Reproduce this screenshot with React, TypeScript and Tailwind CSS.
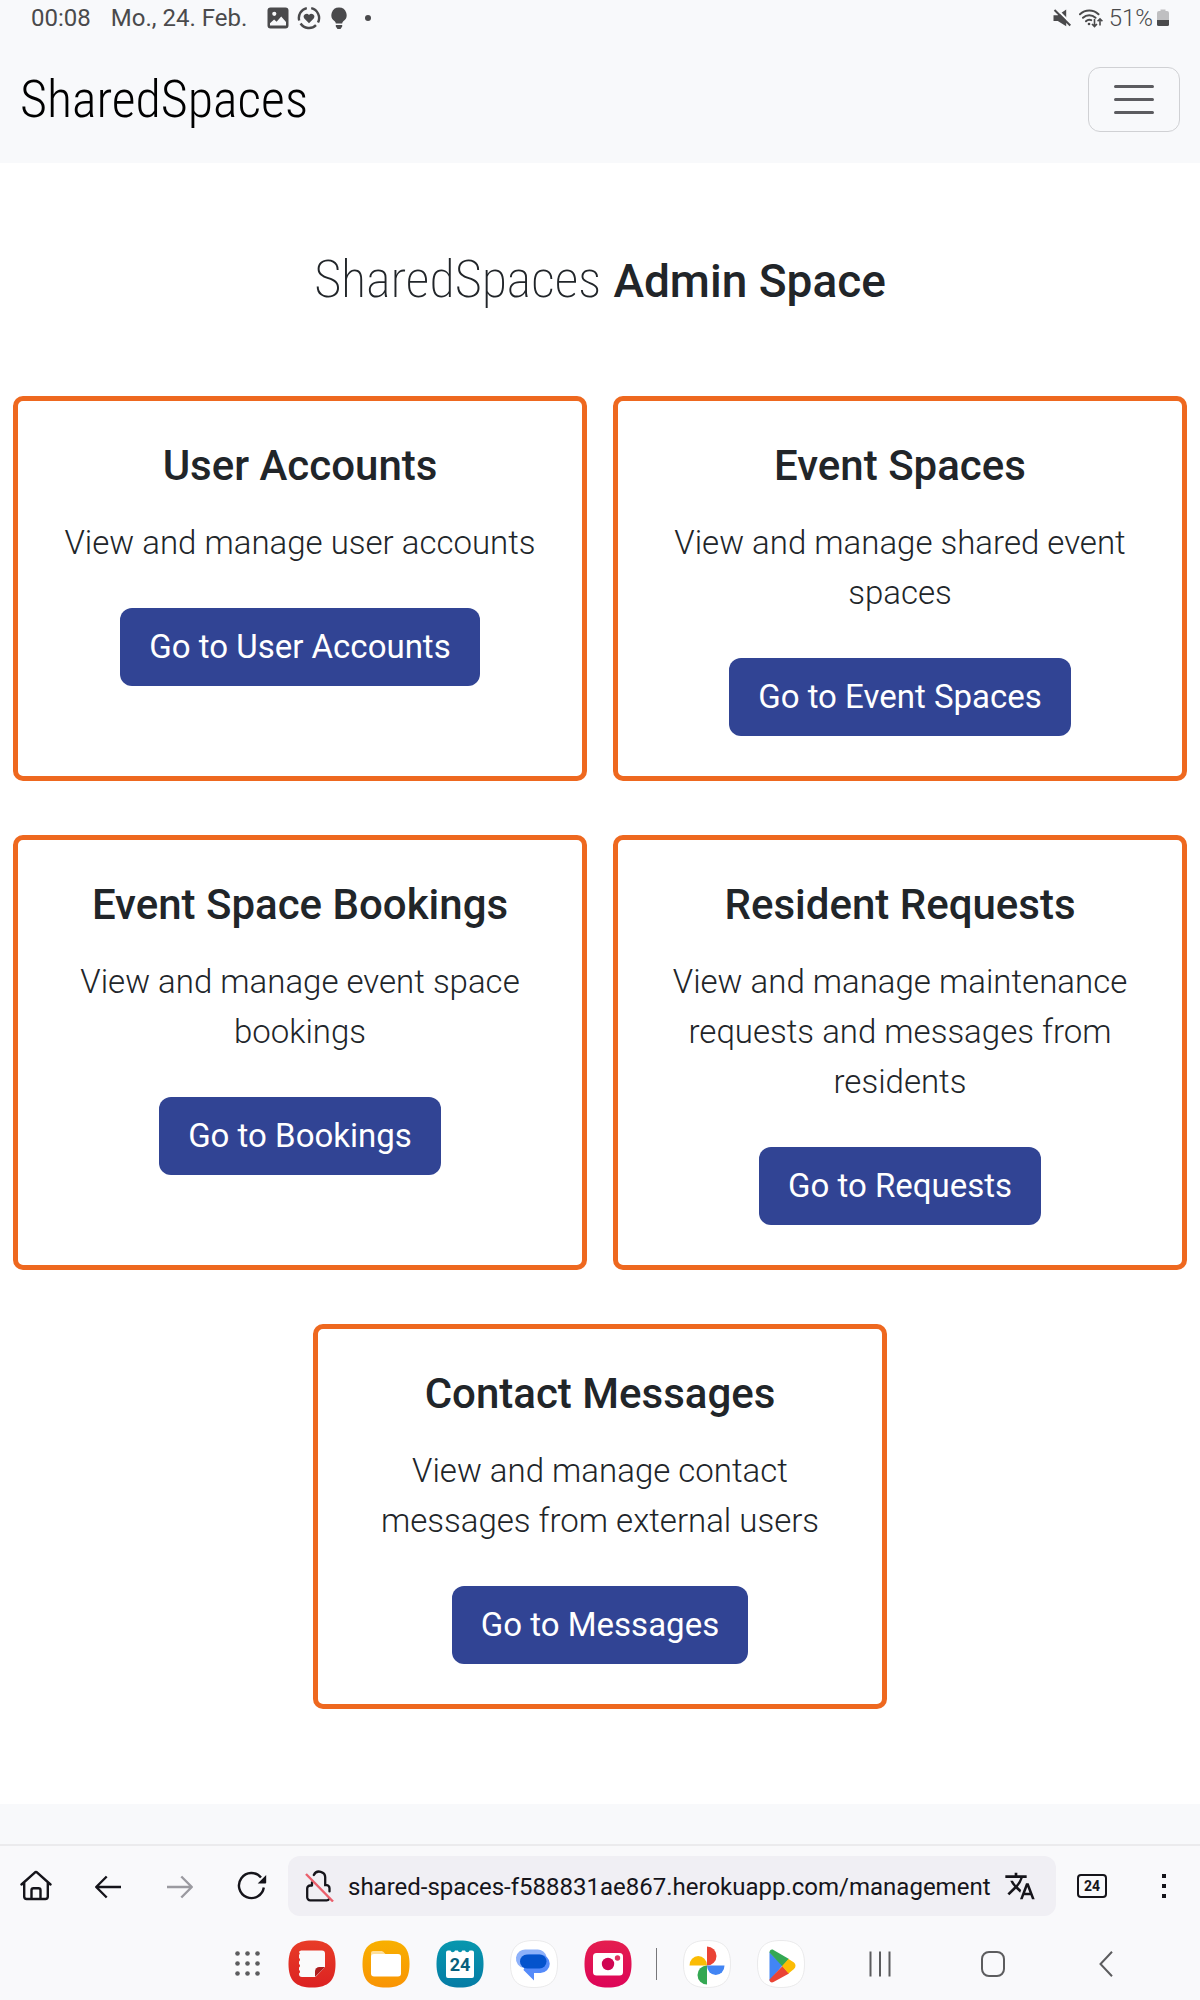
import type { ReactNode } from "react";
import { MdTranslate } from "react-icons/md";

type Card = { title: string; text: string; action: string; href: string };

const cards: Card[] = [
  { title: "User Accounts", text: "View and manage user accounts", action: "Go to User Accounts", href: "#users" },
  { title: "Event Spaces", text: "View and manage shared event spaces", action: "Go to Event Spaces", href: "#spaces" },
  { title: "Event Space Bookings", text: "View and manage event space bookings", action: "Go to Bookings", href: "#bookings" },
  { title: "Resident Requests", text: "View and manage maintenance requests and messages from residents", action: "Go to Requests", href: "#requests" },
  { title: "Contact Messages", text: "View and manage contact messages from external users", action: "Go to Messages", href: "#messages" },
];

function StatusBar() {
  return (
    <div className="flex h-9 items-center justify-between px-[31px] text-2xl leading-9 text-[#4a4a4c]">
      <div className="flex items-center">
        <span>00:08</span>
        <span className="ml-5">Mo., 24. Feb.</span>
        <svg className="ml-5 size-[22px]" viewBox="0 0 22 22" fill="currentColor" aria-hidden="true">
          <path fillRule="evenodd" d="M3.5 0.5h15a3 3 0 0 1 3 3v15a3 3 0 0 1-3 3h-15a3 3 0 0 1-3-3v-15a3 3 0 0 1 3-3ZM7.3 4.7a2.1 2.1 0 1 0 0 4.2 2.1 2.1 0 0 0 0-4.2ZM3 18.5h16v-3.4l-4.8-5.6-4.6 5.2-2.5-2.2L3 16.2Z" />
        </svg>
        <svg className="ml-2 size-6" viewBox="0 0 24 24" fill="none" stroke="currentColor" strokeWidth="2.4" aria-hidden="true">
          <path d="M9.8 2.2A10 10 0 0 0 2.2 14.5M3.6 17.5A10 10 0 0 0 19 19.200M21 16.500A10 10 0 0 0 14.200 2.200" />
          <path fill="currentColor" stroke="none" d="M12 17.200 7.300 12.400A2.800 2.800 0 0 1 12 9a2.800 2.800 0 0 1 4.700 3.400Z" />
        </svg>
        <svg className="ml-2.5 h-[23px] w-4" viewBox="0 0 16 23" fill="currentColor" aria-hidden="true">
          <path d="M8 0.500a7.500 7.500 0 0 0-4.300 13.700c.7.600 1 1.300 1.100 2.300h6.400c.1-1 .4-1.700 1.100-2.300A7.500 7.500 0 0 0 8 .500ZM4.800 18h6.400v1.500L9.500 22h-3l-1.700-2.500Z" />
        </svg>
        <span className="ml-[18px] size-1.5 rounded-full bg-current" />
      </div>
      <div className="flex items-center">
        <svg className="mr-2 size-[18px]" viewBox="0 0 18 18" aria-hidden="true">
          <path fill="currentColor" d="M0.500 6.200h4.300L13.200 0.500v16.800L4.800 12H.5Z" />
          <path stroke="#f8f9fb" strokeWidth="2.200" d="M3.500 0 18 14.500" />
          <path stroke="currentColor" strokeWidth="2" d="M1.500 1 17.300 16.500" />
        </svg>
        <svg className="mr-1.5 h-5 w-6" viewBox="0 0 24 20" fill="none" stroke="currentColor" strokeWidth="2" strokeLinecap="round" aria-hidden="true">
          <path d="M1 6.200a13.500 13.500 0 0 1 18.500 0M4 9.800a9 9 0 0 1 12.500 0M7 13.200a4.800 4.800 0 0 1 5.200-1" />
          <circle cx="10" cy="16" r="1.300" fill="currentColor" stroke="none" />
          <path strokeWidth="1.600" strokeLinecap="butt" d="M15.500 11v7.500M13 16l2.500 2.500L18 16M21 17.500V11M18.600 13.300 21 10.800l2.400 2.500" />
        </svg>
        <span className="font-light">51%</span>
        <svg className="ml-1 h-[18px] w-3" viewBox="0 0 12 18" aria-hidden="true">
          <path fill="#bfbfc1" d="M3.500 0.500h5V2H10a2 2 0 0 1 2 2v7H0V4a2 2 0 0 1 2-2h1.500Z" />
          <path fill="currentColor" d="M0 11h12v4.500a1.500 1.500 0 0 1-1.500 1.500h-9A1.500 1.500 0 0 1 0 15.500Z" />
        </svg>
      </div>
    </div>
  );
}

function SpaceCard({ title, text, action, href }: Card) {
  return (
    <section className="flex w-[calc(50%-13px)] flex-col items-center rounded-[10px] border-[5px] border-[#ee681f] p-10 text-center">
      <h2 className="text-[42px] leading-[50px] font-medium">{title}</h2>
      <p className="mt-[27px] text-[33px] leading-[50px] font-light">{text}</p>
      <a href={href} className="mt-10 rounded-xl bg-[#314494] px-[29px] py-3.5 text-[33px] leading-[50px] text-white">
        {action}
      </a>
    </section>
  );
}

function ToolButton({ label, children }: { label: string; children: ReactNode }) {
  return (
    <button type="button" aria-label={label} className="flex h-[60px] w-[72px] shrink-0 items-center justify-center">
      {children}
    </button>
  );
}

function BrowserBar() {
  return (
    <div className="flex items-center border-t-2 border-[#ebebed] pt-2.5 text-[#15141a]">
      <ToolButton label="Home">
        <svg className="size-8" viewBox="0 0 32 32" fill="none" stroke="currentColor" strokeWidth="2.400" strokeLinejoin="round" strokeLinecap="round">
          <path d="m1.500 14.500 13-11.700a2.200 2.200 0 0 1 3 0l13 11.700M4.200 12.500v14a2.500 2.500 0 0 0 2.500 2.500h18.600a2.500 2.500 0 0 0 2.500-2.500v-14M11.500 28.500v-8.300a2 2 0 0 1 2-2h5a2 2 0 0 1 2 2v8.300" />
        </svg>
      </ToolButton>
      <ToolButton label="Back">
        <svg className="size-7" viewBox="0 0 28 28" fill="none" stroke="currentColor" strokeWidth="2.400">
          <path d="M27 15H2.200M12.700 4.500 2.200 15l10.500 10.500" strokeLinejoin="round" />
        </svg>
      </ToolButton>
      <ToolButton label="Forward">
        <svg className="size-7" viewBox="0 0 28 28" fill="none" stroke="#9b9aa0" strokeWidth="2.400">
          <path d="M1 15h24.800M15.300 4.500 25.800 15 15.300 25.500" strokeLinejoin="round" />
        </svg>
      </ToolButton>
      <ToolButton label="Reload">
        <svg className="size-8" viewBox="0 0 32 32" fill="none" stroke="currentColor" strokeWidth="2.400">
          <path d="M27.800 17.500A12.500 12.500 0 1 1 25 7.500" />
          <path fill="currentColor" stroke="none" d="M30.200 5v7.400a1 1 0 0 1-1 1h-7.500Z" />
        </svg>
      </ToolButton>
      <div className="flex h-[60px] min-w-0 flex-1 items-center rounded-xl bg-[#f0eff4] pr-5 pl-4">
        <svg className="size-8 shrink-0" viewBox="0 0 32 32" fill="none" stroke="currentColor" strokeWidth="2.300" strokeLinecap="round" aria-hidden="true">
          <path d="M8 15.500H6.200a3 3 0 0 0-3 3v8.800a3 3 0 0 0 3 3h16.500a3 3 0 0 0 2.500-1.400M8 15.200v-2.700M9.800 5a6 6 0 0 1 11.400 3v7.200h1.300a3 3 0 0 1 3 3v3.200" />
          <path stroke="#ea5f6c" strokeWidth="2.400" strokeLinecap="butt" d="m2 4 27 27.500" />
        </svg>
        <input
          aria-label="Address"
          defaultValue="shared-spaces-f588831ae867.herokuapp.com/management"
          className="ml-3 h-full min-w-0 flex-1 bg-transparent pt-0.5 text-2xl outline-none"
        />
        <button type="button" aria-label="Translate page" className="shrink-0">
          <MdTranslate className="size-8" />
        </button>
      </div>
      <ToolButton label="Open tabs">
        <span className="flex h-6 w-[30px] items-center justify-center rounded-sm border-2 border-current text-sm leading-5 font-bold">24</span>
      </ToolButton>
      <ToolButton label="Menu">
        <svg className="h-6 w-1" viewBox="0 0 4 24" fill="currentColor">
          <path d="M0 0h4v4H0ZM0 10h4v4H0ZM0 20h4v4H0Z" />
        </svg>
      </ToolButton>
    </div>
  );
}

const SQUIRCLE = "M24 0.500C40.500 0.500 47.500 7.500 47.500 24S40.500 47.500 24 47.500.5 40.500.5 24 7.500.5 24 .5Z";

function AppIcon({ label, fill, stroke, children }: { label: string; fill: string; stroke?: string; children: ReactNode }) {
  return (
    <button type="button" aria-label={label} className="size-12 shrink-0">
      <svg className="size-12" viewBox="0 0 48 48">
        <path d={SQUIRCLE} fill={fill} stroke={stroke} strokeWidth={stroke ? 0.8 : 0} />
        {children}
      </svg>
    </button>
  );
}

function Taskbar() {
  const dots = [2.5, 12.5, 22.5];
  return (
    <div className="flex h-[84px] items-center justify-end pt-3 pr-[38px] text-[#5c5c5e]">
      <svg className="absolute size-0" aria-hidden="true">
        <defs>
          <linearGradient id="red" x2="0" y2="1"><stop stopColor="#e83c27" /><stop offset="1" stopColor="#dc2222" /></linearGradient>
          <linearGradient id="amber" x2="0" y2="1"><stop stopColor="#f8b000" /><stop offset="1" stopColor="#f99404" /></linearGradient>
          <linearGradient id="teal" x2="0" y2="1"><stop stopColor="#0897ae" /><stop offset="1" stopColor="#057ca5" /></linearGradient>
          <linearGradient id="pink" x2="0" y2="1"><stop stopColor="#e41e4f" /><stop offset="1" stopColor="#dd0558" /></linearGradient>
        </defs>
      </svg>
      <div className="flex items-center gap-[26px]">
        <button type="button" aria-label="All apps">
          <svg className="size-7" viewBox="-1 -1 28 28" fill="currentColor">
            {dots.map((y) => dots.map((x) => <circle key={`${x}-${y}`} cx={x} cy={y} r="2.300" />))}
          </svg>
        </button>
        <AppIcon label="Notes" fill="url(#red)">
          <path fill="#fafafa" d="M14 10.500h20a3 3 0 0 1 3 3v13.500L27.500 37H14a3 3 0 0 1-3-3v-.5a2 2 0 0 0 0-3.500v-2.500a2 2 0 0 0 0-3.500v-2.500a2 2 0 0 0 0-3.500V15a2 2 0 0 0 0-3c.5-1 1.500-1.500 3-1.500Z" />
          <path fill="#ad1d1d" d="M37 27 27 37v-5.500a4.500 4.500 0 0 1 4.500-4.500Z" />
        </AppIcon>
        <AppIcon label="Files" fill="url(#amber)">
          <path fill="#fddf9b" d="M9 18v-5a2 2 0 0 1 2-2h8c1.500 0 2 .5 3 1.500l1.500 1.500V18Z" />
          <rect x="9" y="14" width="30" height="22.500" rx="3" fill="#fff" />
        </AppIcon>
        <AppIcon label="Calendar" fill="url(#teal)">
          <path fill="#fff" d="M12 10.500h2.500a2.300 2.300 0 0 0 4.500 0h2.800a2.300 2.300 0 0 0 4.500 0h2.700a2.300 2.300 0 0 0 4.500 0H36a2 2 0 0 1 2 2V36a2 2 0 0 1-2 2H12a2 2 0 0 1-2-2V12.500a2 2 0 0 1 2-2Z" />
          <text x="24" y="31" textAnchor="middle" fill="#075f7d" className="text-lg font-bold">24</text>
        </AppIcon>
        <AppIcon label="Messages" fill="#fff" stroke="#e4e4e6">
          <path fill="#8db1fa" d="M16.500 9.500h11a9 9 0 0 1 9 7l-9 11.500H14a9.300 9.300 0 0 1 2.500-18.500Z" />
          <path fill="#558bfa" d="M18.500 14.500h12a9 9 0 0 1 0 18.500H24v7.500L13.500 30Z" />
          <rect x="10" y="14.500" width="26.500" height="14" rx="7" fill="#0453cc" />
        </AppIcon>
        <AppIcon label="Camera" fill="url(#pink)">
          <rect x="9" y="13" width="30" height="22.500" rx="3.500" fill="#fff" />
          <circle cx="24" cy="24" r="6.200" fill="#d00552" />
          <circle cx="33.500" cy="18" r="2.700" fill="#e0335f" />
        </AppIcon>
      </div>
      <span className="mr-[26px] ml-6 h-8 w-px bg-[#77777a]" />
      <div className="flex items-center gap-[26px]">
        <AppIcon label="Photos" fill="#fff" stroke="#e4e4e6">
          <path fill="#ea4335" d="M24 6.500a9.500 9.500 0 0 1 0 19Z" />
          <path fill="#fbbc04" d="M24 25.500H6.500a8.750 9.500 0 0 1 17.500 0Z" />
          <path fill="#4285f4" d="M24 25.500h17.500a8.750 9.500 0 0 1-17.500 0Z" />
          <path fill="#34a853" d="M24 25.500v19a9.500 9.500 0 0 1 0-19Z" />
        </AppIcon>
        <AppIcon label="Play Store" fill="#fff" stroke="#e4e4e6">
          <path fill="#4285f4" d="M12.500 12v29l13-15.500Z" />
          <path fill="#34a853" d="M12.500 12.500c0-2.500 2-3.500 4-2.500L32 19l-6.500 7.500Z" />
          <path fill="#ea4335" d="M12.500 39.500c0 2.500 2 3.500 4 2.500L32 33.500l-6.500-7.500Z" />
          <path fill="#fbbc04" d="m31.500 19 5.500 3.500c2 1.500 2 5 0 6.500l-5.500 4.500-6.500-7.500Z" />
        </AppIcon>
      </div>
      <div className="ml-[18px] flex">
        <button type="button" aria-label="Recent apps" className="flex w-[113px] justify-center">
          <svg className="h-[26px] w-[22px]" viewBox="0 0 22 26" stroke="currentColor" strokeWidth="2"><path d="M1.500 0.500v25M11 .5v25M20.500 .5v25" /></svg>
        </button>
        <button type="button" aria-label="Home screen" className="flex w-[113px] justify-center">
          <svg className="size-[26px]" viewBox="0 0 26 26" fill="none" stroke="currentColor" strokeWidth="2"><rect x="2" y="1" width="22" height="24" rx="7" /></svg>
        </button>
        <button type="button" aria-label="Go back" className="flex w-[113px] justify-center">
          <svg className="h-[26px] w-[14px]" viewBox="0 0 14 26" fill="none" stroke="currentColor" strokeWidth="2"><path d="M13 0.700 1.500 13 13 25.300" /></svg>
        </button>
      </div>
    </div>
  );
}

export default function App() {
  return (
    <div className="flex min-h-screen flex-col bg-white font-[Roboto,sans-serif] text-[#212529]">
      <header className="bg-[#f8f9fb]">
        <StatusBar />
        <nav className="flex items-center justify-between px-5 py-[31px]">
          <a href="#home" className="font-['Roboto_Condensed',Roboto,sans-serif] text-[52px] leading-[65px] font-light text-black">
            SharedSpaces
          </a>
          <button type="button" aria-label="Toggle navigation" className="flex h-[65px] w-[92px] items-center justify-center rounded-xl border border-[#d0d1d4]">
            <svg className="h-[30px] w-10" viewBox="0 0 40 30" stroke="#5c5c60" strokeWidth="3" strokeLinecap="round">
              <path d="M1.500 1.500h37M1.500 14.500h37M1.500 27.500h37" />
            </svg>
          </button>
        </nav>
      </header>

      <main className="px-[13px] pt-[82px] pb-[95px]">
        <h1 className="mb-20 flex items-baseline justify-center gap-3 text-[46px] leading-[70px] font-medium">
          <span className="font-['Roboto_Condensed',Roboto,sans-serif] text-[52px] font-extralight">SharedSpaces</span>
          <span>Admin Space</span>
        </h1>
        <div className="flex flex-wrap justify-center gap-x-[26px] gap-y-[54px]">
          {cards.map((card) => (
            <SpaceCard key={card.title} {...card} />
          ))}
        </div>
      </main>

      <div className="flex-1 bg-[#f8f9fb]" />
      <footer className="bg-[#f9f9fb]">
        <BrowserBar />
        <Taskbar />
      </footer>
    </div>
  );
}
